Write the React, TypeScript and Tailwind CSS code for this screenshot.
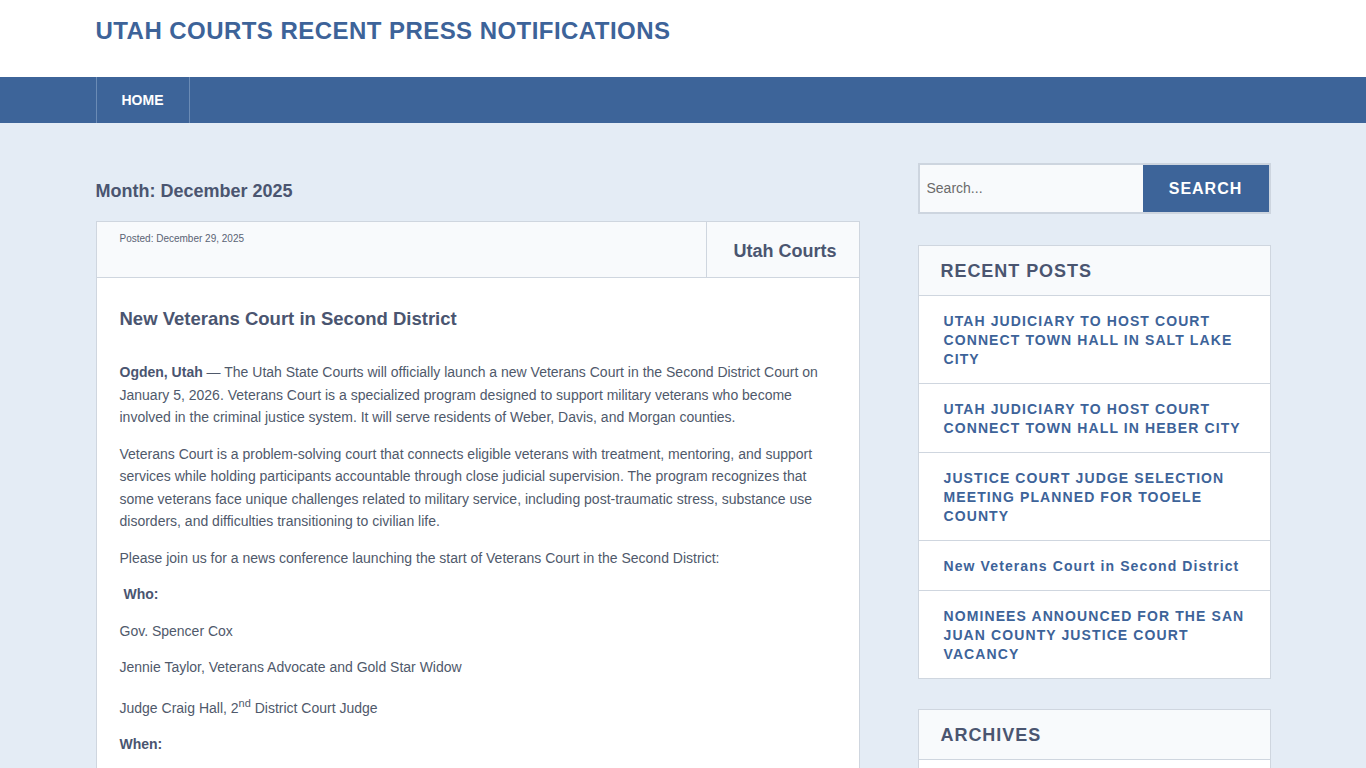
import React from "react";

const recent = [
  "UTAH JUDICIARY TO HOST COURT CONNECT TOWN HALL IN SALT LAKE CITY",
  "UTAH JUDICIARY TO HOST COURT CONNECT TOWN HALL IN HEBER CITY",
  "JUSTICE COURT JUDGE SELECTION MEETING PLANNED FOR TOOELE COUNTY",
  "New Veterans Court in Second District",
  "NOMINEES ANNOUNCED FOR THE SAN JUAN COUNTY JUSTICE COURT VACANCY",
];

export default function App() {
  return (
    <div
      className="min-h-screen bg-[#e4ecf5] text-[#4f596b]"
      style={{ fontFamily: '"Liberation Sans", Arial, sans-serif' }}
    >
      {/* header */}
      <header className="bg-white">
        <div className="mx-auto w-[1175px] h-[77px] pt-[17px]">
          <h1 className="text-[24px] font-bold tracking-[0.45px] text-[#3d6399] leading-[28px]">
            UTAH COURTS RECENT PRESS NOTIFICATIONS
          </h1>
        </div>
      </header>
      <nav className="bg-[#3d6499] h-[46px]">
        <div className="mx-auto w-[1175px] h-full flex">
          <a className="h-full flex items-center px-[25px] border-l border-r border-[#6b8bb5] text-white text-[14px] font-bold">
            HOME
          </a>
        </div>
      </nav>

      <div className="mx-auto w-[1175px] flex gap-[58px] pt-[40px]">
        {/* main column */}
        <main className="w-[764px] shrink-0">
          <h2 className="mt-[18px] mb-[20px] text-[18px] font-bold text-[#4a5570] leading-[20px]">
            Month: December 2025
          </h2>
          <article className="border border-[#cfd6df] bg-white">
            <div className="flex h-[56px] bg-[#f8fafc] border-b border-[#cfd6df]">
              <div className="flex-1 pl-[23px] pt-[9px] text-[10px] text-[#5a6374]">
                Posted: December 29, 2025
              </div>
              <div className="border-l border-[#cfd6df] pl-[27px] pr-[22px] pt-[4px] flex items-center text-[18px] font-bold text-[#4a5570]">
                Utah Courts
              </div>
            </div>
            <div className="px-[23px] pt-[30px] pb-6 text-[14px] leading-[22.5px]">
              <h3 className="text-[18.5px] font-bold text-[#4a5570] leading-[22px] mb-[31px]">
                New Veterans Court in Second District
              </h3>
              <p className="mb-[14px]">
                <strong className="text-[#4a5570]">Ogden, Utah</strong> — The Utah State Courts will officially launch a
                new Veterans Court in the Second District Court on January 5, 2026. Veterans Court is a specialized program
                designed to support military veterans who become involved in the criminal justice system. It will serve
                residents of Weber, Davis, and Morgan counties.
              </p>
              <p className="mb-[14px]">
                Veterans Court is a problem-solving court that connects eligible veterans with treatment, mentoring, and
                support services while holding participants accountable through close judicial supervision. The program
                recognizes that some veterans face unique challenges related to military service, including post-traumatic
                stress, substance use disorders, and difficulties transitioning to civilian life.
              </p>
              <p className="mb-[14px]">
                Please join us for a news conference launching the start of Veterans Court in the Second District:
              </p>
              <p className="mb-[14px] pl-[4px] font-bold text-[#4a5570]">Who:</p>
              <p className="mb-[14px]">Gov. Spencer Cox</p>
              <p className="mb-[14px]">Jennie Taylor, Veterans Advocate and Gold Star Widow</p>
              <p className="mb-[14px] pt-[4px]">
                Judge Craig Hall, 2<sup className="text-[11px]">nd</sup> District Court Judge
              </p>
              <p className="mb-[14px] font-bold text-[#4a5570]">When:</p>
              <p className="mb-[14px]">Monday, January 5, 2026</p>
            </div>
          </article>
        </main>

        {/* sidebar */}
        <aside className="w-[353px] shrink-0">
          <form className="flex h-[51px] border-2 border-[#cdd5df]">
            <input
              className="flex-1 min-w-0 bg-[#f8fafc] px-[7px] text-[14px] text-[#555] placeholder-[#6b6b6b] outline-none"
              placeholder="Search..."
            />
            <button
              type="button"
              className="w-[126px] bg-[#3d6499] text-white text-[16px] font-bold tracking-[1px]"
            >
              SEARCH
            </button>
          </form>

          <section className="mt-[31px] border border-[#cfd6df] bg-white">
            <h2 className="h-[50px] flex items-center px-[22px] pt-[2px] bg-[#f8fafc] border-b border-[#cfd6df] text-[18px] font-bold tracking-[0.95px] text-[#4a5570]">
              RECENT POSTS
            </h2>
            <ul>
              {recent.map((t, i) => (
                <li
                  key={t}
                  className={
                    "px-[25px] pt-[16px] pb-[14px] " + (i < recent.length - 1 ? "border-b border-[#cfd6df]" : "")
                  }
                >
                  <a className="block text-[14px] font-bold leading-[19px] tracking-[1.1px] text-[#3d6399]">{t}</a>
                </li>
              ))}
            </ul>
          </section>

          <section className="mt-[30px] border border-[#cfd6df] bg-white">
            <h2 className="h-[50px] flex items-center px-[22px] pt-[2px] bg-[#f8fafc] border-b border-[#cfd6df] text-[18px] font-bold tracking-[0.95px] text-[#4a5570]">
              ARCHIVES
            </h2>
            <ul>
              <li className="px-[25px] py-[15px]">
                <a className="block text-[14px] font-bold leading-[19px] tracking-[1.1px] text-[#3d6399]">
                  DECEMBER 2025
                </a>
              </li>
            </ul>
          </section>
        </aside>
      </div>
    </div>
  );
}
